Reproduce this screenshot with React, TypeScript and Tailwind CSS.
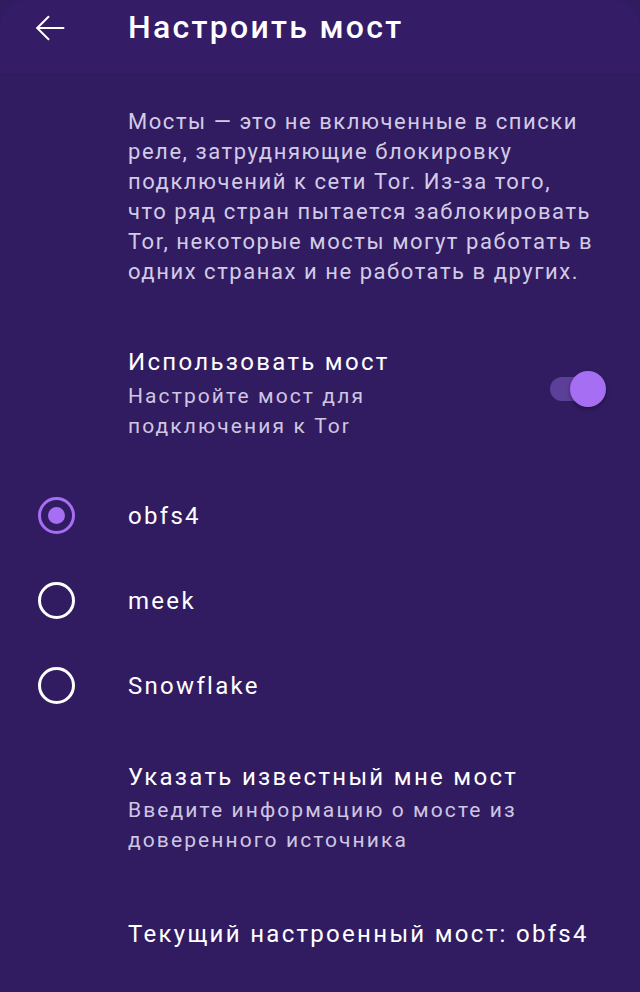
import { useState } from 'react'

const options = ['obfs4', 'meek', 'Snowflake']

const descriptionLines = [
  'Мосты — это не включенные в списки',
  'реле, затрудняющие блокировку',
  'подключений к сети Tor. Из-за того,',
  'что ряд стран пытается заблокировать',
  'Tor, некоторые мосты могут работать в',
  'одних странах и не работать в других.',
]

export default function App() {
  const [selected, setSelected] = useState('obfs4')
  const [enabled, setEnabled] = useState(true)

  return (
    <div
      className="w-[640px] h-[992px] bg-[#311c62] text-white overflow-hidden"
      style={{ fontFamily: 'Roboto, "Noto Sans", sans-serif' }}
    >
      {/* Top bar */}
      <div className="h-[75px] bg-[#341d66] border-b border-[#2d1a58] rounded-t-[28px] flex items-start">
        <button className="w-[100px] h-[56px] flex items-center pl-[32px]">
          <svg width="36" height="36" viewBox="0 0 24 24" fill="none" stroke="#ffffff" strokeWidth="1.3" strokeLinecap="round" strokeLinejoin="round">
            <path d="M21 12H3.5" />
            <path d="M11 4.5L3.5 12L11 19.5" />
          </svg>
        </button>
        <h1 className="ml-[28px] mt-[5px] text-[32px] leading-[44px] font-medium tracking-[2.3px]">Настроить мост</h1>
      </div>

      {/* Description */}
      <p className="pl-[128px] mt-[32px] text-[22px] leading-[30px] tracking-[1.55px] text-[#d3cbe5] whitespace-nowrap">
        {descriptionLines.map(line => (
          <span key={line} className="block">{line}</span>
        ))}
      </p>

      {/* Use bridge switch */}
      <div className="flex items-center pl-[128px] pr-[34px] mt-[58px]" onClick={() => setEnabled(!enabled)}>
        <div className="flex-1">
          <div className="text-[24px] leading-[34px] tracking-[2.3px] text-white">Использовать мост</div>
          <div className="text-[21px] leading-[30px] tracking-[2.1px] text-[#cfc6e1] mt-[2px]">
            Настройте мост для<br />подключения к Tor
          </div>
        </div>
        <div className="relative w-[58px] h-[36px] flex items-center mb-[8px]">
          <div className={`absolute left-[2px] w-[42px] h-[24px] rounded-full ${enabled ? 'bg-[#5c3f99]' : 'bg-[#6b6480]'}`} />
          <div
            className={`absolute w-[36px] h-[36px] rounded-full shadow-[0_2px_4px_rgba(0,0,0,0.35)] ${enabled ? 'left-[22px] bg-[#a66ef2]' : 'left-0 bg-[#e5e0ef]'}`}
          />
        </div>
      </div>

      {/* Radio options */}
      <div className="mt-[32px]">
        {options.map(option => {
          const active = option === selected
          return (
            <div
              key={option}
              className="flex items-center h-[85px]"
              onClick={() => setSelected(option)}
            >
              <div className="w-[128px] flex items-center pl-[38px]">
                <div
                  className={`w-[37px] h-[37px] rounded-full border-[3.5px] flex items-center justify-center ${active ? 'border-[#a66ef2]' : 'border-white'}`}
                >
                  {active && <div className="w-[17px] h-[17px] rounded-full bg-[#a66ef2]" />}
                </div>
              </div>
              <span className="text-[24px] leading-[34px] tracking-[2.3px] text-white">{option}</span>
            </div>
          )
        })}
      </div>

      {/* Custom bridge */}
      <div className="pl-[128px] pr-[20px] mt-[32px]">
        <div className="text-[24px] leading-[34px] tracking-[2.3px] text-white">Указать известный мне мост</div>
        <div className="text-[21px] leading-[30px] tracking-[2.1px] text-[#cfc6e1] mt-[1px]">
          Введите информацию о мосте из<br />доверенного источника
        </div>
      </div>

      {/* Current bridge */}
      <div className="pl-[128px] mt-[62px] text-[24px] leading-[34px] tracking-[2.3px] text-white whitespace-nowrap">
        Текущий настроенный мост: obfs4
      </div>
    </div>
  )
}
